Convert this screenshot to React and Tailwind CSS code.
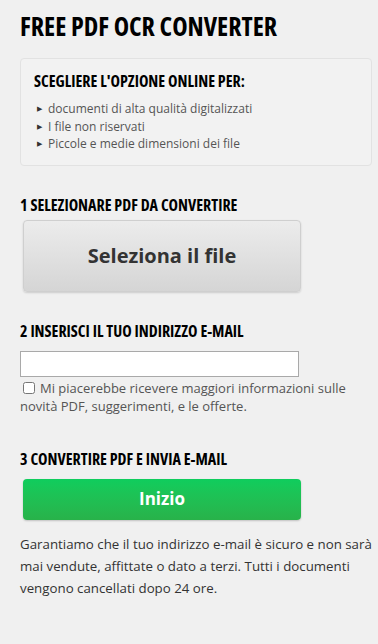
import React from "react";

const headFont = { fontFamily: '"Open Sans", sans-serif', fontStretch: "75%" };

const Heading = ({ children, className = "" }) => (
    <h2
        style={headFont}
        className={`text-[16px] font-bold uppercase text-black leading-[20px] ${className}`}
    >
        {children}
    </h2>
);

const Bullet = ({ children }) => (
    <li className="flex items-center gap-[5px] leading-[17.5px]">
        <span className="text-[7px] text-[#333] w-[6px]">&#9654;</span>
        <span>{children}</span>
    </li>
);

export default function App() {
    return (
        <div className="min-h-[644px] bg-[#f0f0f0] px-5 pt-[9px] pb-10 font-['Open_Sans',sans-serif] text-[#333]">
            {/* Title */}
            <h1
                style={headFont}
                className="text-[26px] font-bold uppercase text-black leading-[34px]"
            >
                Free PDF OCR Converter
            </h1>

            {/* Options box */}
            <div className="mt-[15px] mr-[-14px] rounded-[4px] border border-[#e2e2e2] bg-[#f2f2f2] px-[13px] pt-[12px] pb-[12px]">
                <Heading>Scegliere l'opzione online per:</Heading>
                <ul className="mt-[9px] ml-[3px] text-[12px] text-[#555]">
                    <Bullet>documenti di alta qualità digitalizzati</Bullet>
                    <Bullet>I file non riservati</Bullet>
                    <Bullet>Piccole e medie dimensioni dei file</Bullet>
                </ul>
            </div>

            {/* Step 1 */}
            <Heading className="mt-[29px]">1 Selezionare PDF da convertire</Heading>
            <button className="ml-[3px] mt-[5px] flex h-[72px] w-[278px] items-center justify-center rounded-[4px] border border-[#cfcfcf] bg-gradient-to-b from-[#ececec] to-[#d5d5d5] text-[20px] font-bold text-[#333] shadow-[0_1px_2px_rgba(0,0,0,0.15)]">
                Seleziona il file
            </button>

            {/* Step 2 */}
            <Heading className="mt-[29px]">2 Inserisci il tuo indirizzo e-mail</Heading>
            <input
                type="text"
                className="mt-[10px] block h-[26px] w-[279px] border border-[#a9a9a9] bg-white"
            />
            <label className="mt-[2px] block text-[13px] leading-[18px] text-[#555]">
                <input
                    type="checkbox"
                    className="mr-[5px] ml-[3px] h-[12px] w-[12px] align-[-1px]"
                />
                Mi piacerebbe ricevere maggiori informazioni sulle novità PDF, suggerimenti, e le offerte.
            </label>

            {/* Step 3 */}
            <Heading className="mt-[34px]">3 Convertire PDF e invia e-mail</Heading>
            <button className="ml-[3px] mt-[10px] flex h-[41px] w-[278px] items-center justify-center rounded-[4px] bg-gradient-to-b from-[#0fcd5d] to-[#28b24a] text-[17px] font-bold text-white shadow-[0_1px_2px_rgba(0,0,0,0.2)]">
                Inizio
            </button>

            <p className="mt-[13px] mr-[-14px] text-[13.3px] leading-[22px] text-[#333]">
                Garantiamo che il tuo indirizzo e-mail è sicuro e non sarà mai vendute, affittate o dato a terzi. Tutti i documenti vengono cancellati dopo 24 ore.
            </p>
        </div>
    );
}
